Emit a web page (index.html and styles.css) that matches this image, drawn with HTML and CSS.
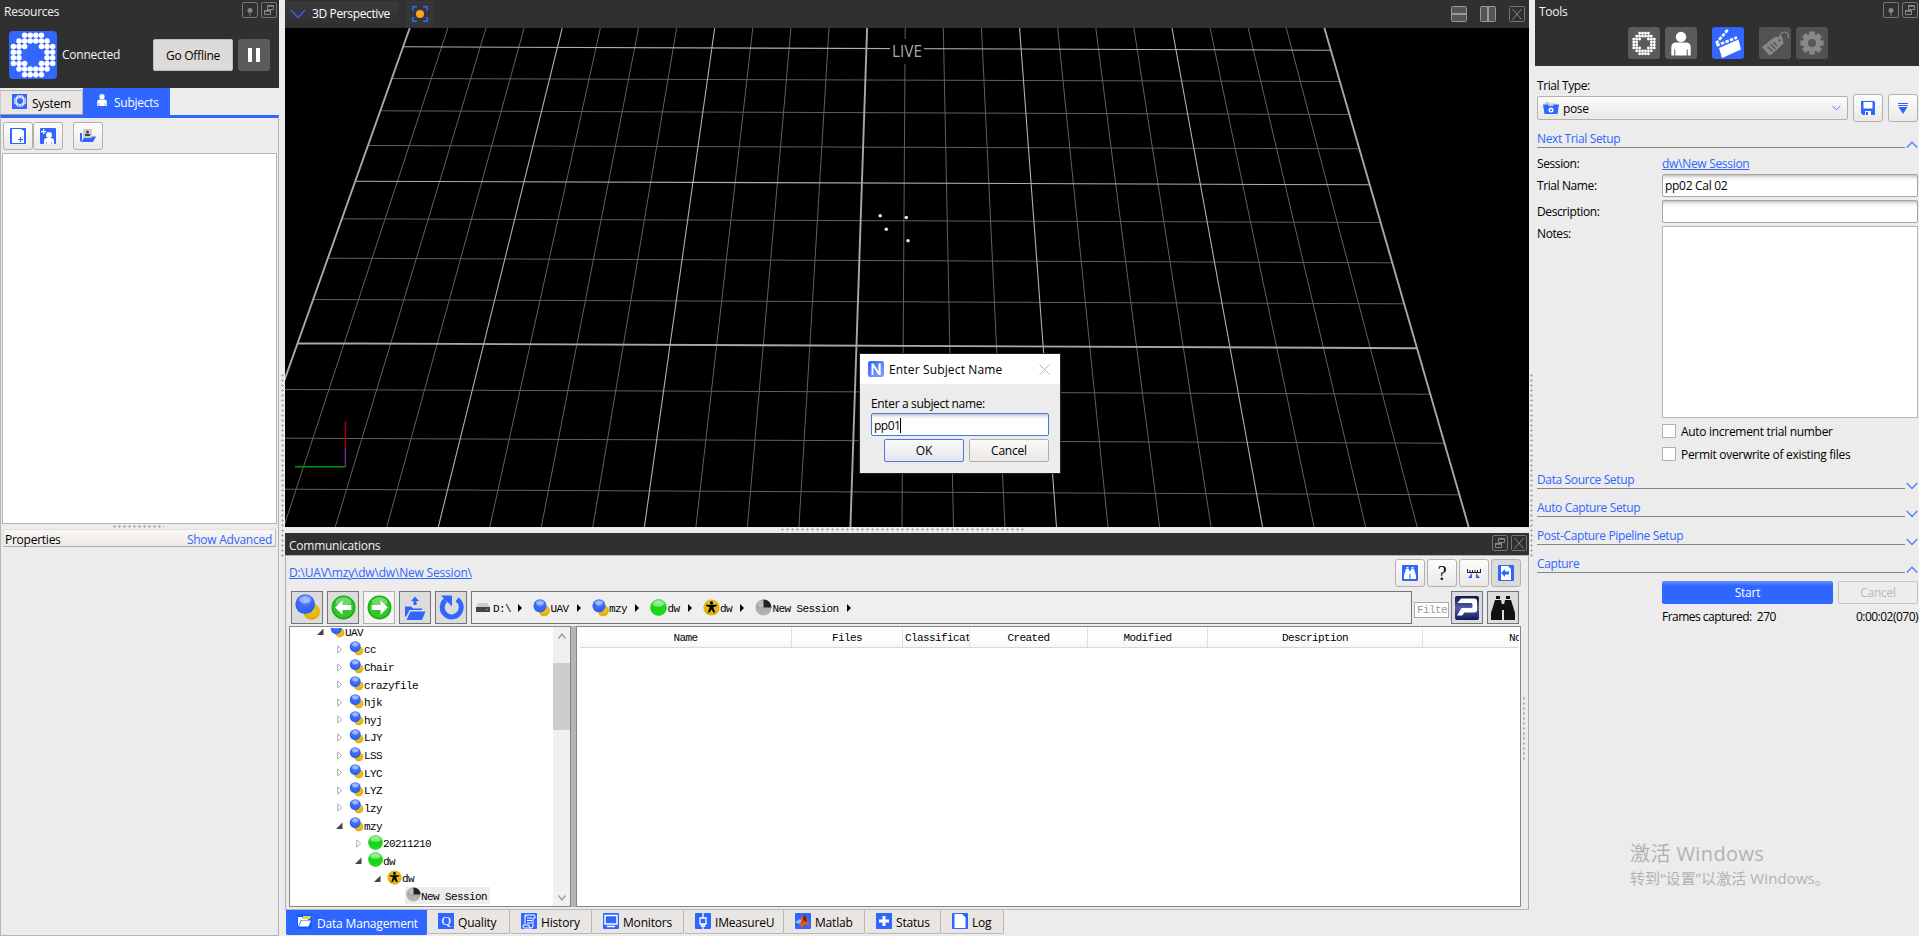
FILE: index.html
```html
<!DOCTYPE html>
<html lang="en">
<head>
<meta charset="utf-8">
<title>Capture Workspace</title>
<link rel="stylesheet" href="styles.css">
</head>
<body>
<svg class="defs" width="0" height="0">
  <defs>
    <radialGradient id="gb" cx=".5" cy=".3" r=".7"><stop offset="0" stop-color="#8aa8ff"/><stop offset=".45" stop-color="#3d6bff"/><stop offset="1" stop-color="#2f5ce8"/></radialGradient>
    <radialGradient id="gy" cx=".5" cy=".4" r=".7"><stop offset="0" stop-color="#efc92a"/><stop offset="1" stop-color="#d9a800"/></radialGradient>
    <linearGradient id="gg" x2="0" y2="1"><stop offset="0" stop-color="#7cf07c"/><stop offset=".45" stop-color="#19d319"/><stop offset="1" stop-color="#18e018"/></linearGradient>
    <linearGradient id="gs" x2="0" y2="1"><stop offset="0" stop-color="#999"/><stop offset="1" stop-color="#b8b8b8"/></linearGradient>
    <linearGradient id="gn" x2="1" y2="1"><stop offset="0" stop-color="#2f5fff"/><stop offset="1" stop-color="#86a6ff"/></linearGradient>
    <linearGradient id="gp" x2="0" y2="1"><stop offset="0" stop-color="#0d1248"/><stop offset=".5" stop-color="#5560a8"/><stop offset="1" stop-color="#10165a"/></linearGradient>
    <symbol id="ring" viewBox="-.6 -.6 8.2 8.2"><path fill="none" stroke="currentColor" stroke-width=".98" stroke-linecap="round" d="M2 0h.01M3 0h.01M4 0h.01M5 0h.01M1 1h.01M2 1h.01M3 1h.01M4 1h.01M5 1h.01M6 1h.01M0 2h.01M1 2h.01M2 2h.01M5 2h.01M6 2h.01M7 2h.01M0 3h.01M1 3h.01M6 3h.01M7 3h.01M0 4h.01M1 4h.01M6 4h.01M7 4h.01M0 5h.01M1 5h.01M2 5h.01M5 5h.01M6 5h.01M7 5h.01M1 6h.01M2 6h.01M3 6h.01M4 6h.01M5 6h.01M6 6h.01M2 7h.01M3 7h.01M4 7h.01M5 7h.01"/></symbol>
    <symbol id="person" viewBox="0 0 20 24"><circle cx="10" cy="5.4" r="5.2" fill="currentColor"/><path fill="currentColor" d="M.3 24v-8q0-5 5-5h9.400q5 0 5 5v8h-3v-6h-1v6H4.300v-6h-1v6z"/></symbol>
    <symbol id="spheres" viewBox="0 0 24 26"><circle cx="16" cy="17" r="8" fill="url(#gy)"/><circle cx="9.800" cy="9.800" r="9.500" fill="url(#gb)"/><ellipse cx="9.800" cy="5.500" rx="6" ry="3.500" fill="#fff" opacity=".35"/></symbol>
    <symbol id="green" viewBox="0 0 16 16"><circle cx="8" cy="8" r="7.500" fill="url(#gg)" stroke="#13b813" stroke-width=".5"/><ellipse cx="8" cy="4.500" rx="5" ry="2.800" fill="#fff" opacity=".4"/></symbol>
    <symbol id="biped" viewBox="0 0 16 16"><circle cx="8" cy="8" r="7.600" fill="url(#gy)"/><circle cx="8" cy="3.700" r="1.500"/><path d="M3 5.500h10v1.200L9.700 7.800l1.800 5h-1.700L8 9.800l-1.800 3H4.500l1.800-5L3 6.700z"/></symbol>
    <symbol id="session" viewBox="0 0 16 16"><circle cx="8" cy="8" r="7.500" fill="url(#gs)"/><ellipse cx="7" cy="4.500" rx="4.500" ry="3" fill="#fff" opacity=".3"/><path d="M8 8V.5A7.500 7.500 0 0 1 15.500 8z" fill="#222"/></symbol>
    <symbol id="pin" viewBox="0 0 16 16"><rect x=".5" y=".5" width="15" height="15" rx="1.500" fill="none" stroke="#777772"/><circle cx="8" cy="8.500" r="2.500" fill="#888"/><path d="M8 10v4.500" stroke="#666" stroke-width="1.500"/></symbol>
    <symbol id="float" viewBox="0 0 16 16"><rect x=".5" y=".5" width="15" height="15" rx="1.500" fill="none" stroke="#777772"/><path d="M6.500 3.500h6v4h-6zM3.500 8.500h6v4h-6z" fill="#303030" stroke="#888880"/><path d="M6 4h7M3 9h7" stroke="#888880" stroke-width="1.500"/></symbol>
    <symbol id="close" viewBox="0 0 16 16"><rect x=".5" y=".5" width="15" height="15" rx="1" fill="none" stroke="#777772"/><path d="M3.500 3l9 10.500M12.500 3l-9 10.500" stroke="#888880"/></symbol>
    <symbol id="bino" viewBox="0 0 24 26"><path fill="currentColor" d="M5 1h4v3H5zM15 1h4v3h-4zM4 5h6l1 5v15H0v-7zM14 5h6l4 13v7H13V10zM10.500 9h3v6h-3z"/></symbol>
    <symbol id="arrow" viewBox="0 0 24 24"><circle cx="12" cy="12" r="10.700" fill="#35c52c" stroke="#18b010" stroke-width="1.500"/><ellipse cx="12" cy="6.500" rx="7.500" ry="4.500" fill="#fff" opacity=".3"/><path fill="#fff" d="M4 12l7-7v4.500h8.500v5H11V19z"/></symbol>
    <symbol id="down" viewBox="0 0 12 8"><path d="M.8 1L6 6.500 11.200 1" fill="none" stroke="#4d7dff" stroke-width="1.300"/></symbol>
    <symbol id="up" viewBox="0 0 12 8"><path d="M.8 6.500L6 1.200l5.200 5.300" fill="none" stroke="#4d7dff" stroke-width="1.300"/></symbol>
    <symbol id="twig" viewBox="0 0 8 10"><path d="M2.500 1l4.500 4-4.500 4z" fill="#fff" stroke="#a6a6a6"/></symbol>
    <symbol id="open" viewBox="0 0 8 8"><path d="M7.500 1v6.500H1z" fill="#444"/></symbol>
  </defs>
</svg>

<main class="app">
  <aside class="left">
    <header class="res-head">
      <div class="titlebar"><span>Resources</span><span class="winbtns"><svg><use href="#pin"/></svg><svg><use href="#float"/></svg></span></div>
      <div class="conn">
        <div class="logo"><svg width="46" height="46"><use href="#ring"/></svg></div>
        <span class="conn-text">Connected</span>
        <button class="offline">Go Offline</button>
        <button class="pause"><i></i><i></i></button>
      </div>
    </header>
    <nav class="res-tabs">
      <div class="rtab"><span class="mini"><svg width="12" height="12"><use href="#ring"/></svg></span><span>System</span></div>
      <div class="rtab on"><svg width="10" height="12"><use href="#person"/></svg><span>Subjects</span></div>
    </nav>
    <div class="res-body">
      <div class="res-tools">
        <button class="tb"><svg width="16" height="16" viewBox="0 0 16 16"><rect width="16" height="16" rx="1" fill="#2f66ff"/><path d="M2 1h9l3 2v12H2z" fill="#fff"/><path d="M10.500 9v5M8 11.500h5" stroke="#2f66ff" stroke-width="1.200"/></svg></button>
        <button class="tb"><svg width="16" height="16" viewBox="0 0 16 16"><rect width="16" height="16" rx="1" fill="#2f66ff"/><circle cx="9" cy="7" r="3" fill="#fff"/><path d="M4 16v-3q0-3 3-3h4q3 0 3 3v3h-2v-2h-.5v2h-5v-2H6v2zM3 1h1.200v2H6v1.200H4.200V6H3V4.200H1V3h2z" fill="#fff"/></svg></button>
        <button class="tb gapped"><svg width="16" height="14" viewBox="0 0 16 14"><path d="M0 4h2v6l-1 3-1-1z" fill="#2f66ff"/><path d="M3 0h9v9H3z" fill="#ccc"/><circle cx="7.500" cy="3" r="1.500" fill="#444"/><path d="M5 7V5h5v2z" fill="#444"/><path d="M4 9h7l1.500-1.500H16L13 13H1z" fill="#2f66ff"/></svg></button>
      </div>
      <div class="subject-list"></div>
      <div class="hgrip small"></div>
      <div class="props"><span>Properties</span><a>Show Advanced</a></div>
    </div>
  </aside>

  <div class="vgrip"></div>

  <section class="center">
    <div class="viewbar">
      <div class="viewsel"><svg width="16" height="10" viewBox="0 0 16 10"><path d="M1 1l7 7.500L15 1" fill="none" stroke="#2f66ff" stroke-width="1.200"/></svg><span>3D Perspective</span></div>
      <div class="focus"><svg width="16" height="16" viewBox="0 0 16 16"><path d="M.8 5V.8H5M11 .8h4.200V5M15.200 11v4.200H11M5 15.200H.8V11" fill="none" stroke="#2f66ff" stroke-width="1.600"/><circle cx="8" cy="8" r="4" fill="#ffa51e"/></svg></div>
      <div class="splitbtns">
        <svg viewBox="0 0 16 16"><rect x=".5" y=".5" width="15" height="15" rx="1" fill="#555" stroke="#999"/><path d="M1 8h14" stroke="#999" stroke-width="2"/></svg>
        <svg viewBox="0 0 16 16"><rect x=".5" y=".5" width="15" height="15" rx="1" fill="#555" stroke="#999"/><path d="M8 1v14" stroke="#999" stroke-width="2"/></svg>
        <svg><use href="#close"/></svg>
      </div>
    </div>
    <div class="view3d">
      <svg class="scene" width="1244" height="499" viewBox="285 28 1244 499">
        <g fill="none">
          <path class="minor" d="M447.900 28L283.700 527M486 28L335.200 527M524.100 28L386.800 527M600.400 28L489.800 527M638.500 28L541.300 527M676.600 28L592.800 527M752.800 28L695.900 527M790.900 28L747.400 527M829 28L798.900 527M905.200 28L902 527M943.300 28L953.500 527M981.500 28L1005 527M1057.700 28L1108 527M1095.800 28L1159.600 527M1133.900 28L1211.100 527M1210.100 28L1314.100 527M1248.200 28L1365.600 527M1286.300 28L1417.200 527"/>
          <path class="minor" d="M392 78.500L1339.700 81.500M380.500 110.800L1349.300 114.500M368.200 145.500L1359.200 148.800M342 218.800L1380.500 222.500M328 258.200L1392.200 262.800M313.300 299.500L1404 303.800M285 389.500L1430.200 394.200M285 438.200L1444.300 443.200M285 489.200L1459.200 494.800"/>
          <path class="major" d="M562.200 28L438.300 527M714.700 28L644.400 527M1019.600 28L1056.500 527M1172 28L1262.600 527M403.300 46.800L1330.700 50.200M355.400 181.200L1369.600 184.800"/>
          <path class="bold" d="M409.800 28L232.200 527M867.100 28L850.400 527M1324.400 28L1468.700 527M297.800 343.200L1416.800 348.200"/>
        </g>
        <rect x="890" y="39" width="34" height="25" fill="#000"/>
        <text x="892" y="57.300" class="live" textLength="30" lengthAdjust="spacingAndGlyphs">LIVE</text>
        <g fill="#e4e4e4"><circle cx="880.200" cy="215.800" r="1.800"/><circle cx="906.300" cy="217.500" r="1.800"/><circle cx="886.300" cy="229.300" r="1.800"/><circle cx="908" cy="240.800" r="1.800"/></g>
        <path d="M345.400 421v27" stroke="#a00010" stroke-width="1.500"/><path d="M345.400 448v19" stroke="#6b2a90" stroke-width="1.500"/><path d="M295 466.700h50" stroke="#009800" stroke-width="1.500"/>
      </svg>
      <div class="dialog">
        <div class="dlg-title"><svg width="16" height="16" viewBox="0 0 16 16"><rect width="16" height="16" rx="2" fill="url(#gn)"/><path d="M3.500 14V2.500h2l5 8v-8h2.200V14h-2.200l-5-8v8z" fill="#fff"/></svg><span>Enter Subject Name</span><svg width="11" height="11" viewBox="0 0 11 11"><path d="M.5.5l10 10M10.500.5l-10 10" stroke="#b8b8b8"/></svg></div>
        <div class="dlg-body">
          <label>Enter a subject name:</label>
          <div class="input focus-in"><span>pp01</span><i class="caret"></i></div>
          <div class="dlg-btns"><button class="btn default">OK</button><button class="btn">Cancel</button></div>
        </div>
      </div>
    </div>
    <div class="hgrip wide"></div>
    <div class="comm-head"><span>Communications</span><span class="winbtns"><svg><use href="#float"/></svg><svg><use href="#close"/></svg></span></div>
    <div class="comm">
      <div class="path-row">
        <a>D:\UAV\mzy\dw\dw\New Session\</a>
        <div class="path-btns">
          <button class="tb"><svg width="16" height="16" viewBox="0 0 16 16"><rect width="16" height="16" rx="1" fill="#2f66ff"/><svg x="1.500" y="1.500" width="13" height="13" color="#fff"><use href="#bino"/></svg></svg></button>
          <button class="tb q">?</button>
          <button class="tb"><svg width="14" height="9" viewBox="0 0 14 9"><path d="M0 3.500h14M.5 0v3M3 1v2M5.500 1v2M8 1v2M10.500 1v2M13.500 0v3" stroke="#222"/><path d="M1 9l4-5v5zM13 9L9 4v5z" fill="#2f66ff"/></svg></button>
          <button class="tb pressed"><svg width="16" height="16" viewBox="0 0 16 16"><rect width="16" height="16" rx="1" fill="#2f66ff"/><path d="M3 1h7l3 3v11H3z" fill="#fff"/><path d="M3 8l4-4v2.500h4v3H7V12z" fill="#2f66ff"/></svg></button>
        </div>
      </div>
      <div class="nav-row">
        <button class="nb"><svg width="25" height="27"><use href="#spheres"/></svg></button>
        <button class="nb"><svg width="25" height="25"><use href="#arrow"/></svg></button>
        <button class="nb light"><svg width="25" height="25" class="flip"><use href="#arrow"/></svg></button>
        <button class="nb"><svg width="22" height="24" viewBox="0 0 22 24"><path fill="#2f66ff" d="M9.500 9V5H7l4-4.500L15 5h-2.500v4zM1 10.500h6l2 2h9V14H5.500L2 21l-1-1zM6.500 15.500H21.500L18 24H2.500z"/></svg></button>
        <button class="nb"><svg width="25" height="25" viewBox="0 0 25 25"><path d="M18 4.500A9.500 9.500 0 1 1 6.500 5.200" fill="none" stroke="#2f66ff" stroke-width="5"/><path d="M2 .5h11v11z" fill="#2f66ff"/></svg></button>
        <div class="crumbs">
          <svg width="14" height="9" viewBox="0 0 14 9"><path d="M2 0h10l2 5H0z" fill="#ccc"/><path d="M0 4h14v5H0z" fill="#444"/><path d="M10 6.500h2" stroke="#3d3"/></svg><span class="c1">D:\</span><b></b>
          <svg class="sp" width="17" height="18"><use href="#spheres"/></svg><span>UAV</span><b></b>
          <svg class="sp" width="17" height="18"><use href="#spheres"/></svg><span>mzy</span><b></b>
          <svg class="sp" width="17" height="17"><use href="#green"/></svg><span>dw</span><b></b>
          <svg class="sp" width="17" height="17"><use href="#biped"/></svg><span>dw</span><b></b>
          <svg class="sp" width="17" height="17"><use href="#session"/></svg><span>New Session</span><b></b>
        </div>
        <div class="filter">Filter</div>
        <button class="nb p"><svg width="24" height="24" viewBox="0 0 24 24"><rect width="24" height="24" rx="2" fill="url(#gp)"/><path d="M6 2.500h13q3 0 3 3V14q0 2.500-3 2.500H9.500L7 19.500H2L6.500 12H16q1.500 0 1.500-1.500v-2q0-1.500-1.500-1.500H2.500z" fill="#fff"/></svg></button>
        <button class="nb b"><svg width="24" height="26" color="#111"><use href="#bino"/></svg></button>
      </div>
      <div class="panes">
        <div class="tree">
          <div class="rows">
            <div class="row l0 cut"><svg class="tw"><use href="#open"/></svg><svg class="ic"><use href="#spheres"/></svg><span>UAV</span></div>
            <div class="row l1"><svg class="tw"><use href="#twig"/></svg><svg class="ic"><use href="#spheres"/></svg><span>cc</span></div>
            <div class="row l1"><svg class="tw"><use href="#twig"/></svg><svg class="ic"><use href="#spheres"/></svg><span>Chair</span></div>
            <div class="row l1"><svg class="tw"><use href="#twig"/></svg><svg class="ic"><use href="#spheres"/></svg><span>crazyfile</span></div>
            <div class="row l1"><svg class="tw"><use href="#twig"/></svg><svg class="ic"><use href="#spheres"/></svg><span>hjk</span></div>
            <div class="row l1"><svg class="tw"><use href="#twig"/></svg><svg class="ic"><use href="#spheres"/></svg><span>hyj</span></div>
            <div class="row l1"><svg class="tw"><use href="#twig"/></svg><svg class="ic"><use href="#spheres"/></svg><span>LJY</span></div>
            <div class="row l1"><svg class="tw"><use href="#twig"/></svg><svg class="ic"><use href="#spheres"/></svg><span>LSS</span></div>
            <div class="row l1"><svg class="tw"><use href="#twig"/></svg><svg class="ic"><use href="#spheres"/></svg><span>LYC</span></div>
            <div class="row l1"><svg class="tw"><use href="#twig"/></svg><svg class="ic"><use href="#spheres"/></svg><span>LYZ</span></div>
            <div class="row l1"><svg class="tw"><use href="#twig"/></svg><svg class="ic"><use href="#spheres"/></svg><span>lzy</span></div>
            <div class="row l1"><svg class="tw"><use href="#open"/></svg><svg class="ic"><use href="#spheres"/></svg><span>mzy</span></div>
            <div class="row l2"><svg class="tw"><use href="#twig"/></svg><svg class="ic"><use href="#green"/></svg><span>20211210</span></div>
            <div class="row l2"><svg class="tw"><use href="#open"/></svg><svg class="ic"><use href="#green"/></svg><span>dw</span></div>
            <div class="row l3"><svg class="tw"><use href="#open"/></svg><svg class="ic"><use href="#biped"/></svg><span>dw</span></div>
            <div class="row l4"><div class="sel"><svg class="ic"><use href="#session"/></svg><span>New Session</span></div></div>
          </div>
          <div class="scroll">
            <svg width="8" height="6" viewBox="0 0 8 6"><path d="M.5 5.500L4 1l3.500 4.500" fill="none" stroke="#999" stroke-width="1.300"/></svg>
            <div class="thumb"></div>
            <svg width="8" height="6" viewBox="0 0 8 6"><path d="M.5.500L4 5 7.500.500" fill="none" stroke="#999" stroke-width="1.300"/></svg>
          </div>
        </div>
        <div class="split"></div>
        <div class="table">
          <div class="thead"><div>Name</div><div>Files</div><div>Classification</div><div>Created</div><div>Modified</div><div>Description</div><div class="last">Notes</div></div>
        </div>
        <div class="sidegrip"></div>
      </div>
    </div>
    <nav class="btabs">
      <div class="bt on"><svg width="15" height="15" viewBox="0 0 15 15"><rect width="15" height="15" rx="2" fill="#0a60ff"/><path d="M1 3h4l1 1.500h5V6H4l-3 7z" fill="#fff"/><path d="M6 2h8l-1 3H6z" fill="#f7c948"/><path d="M4.500 6.500H14l-2.500 6H2z" fill="#fff"/></svg><span>Data Management</span></div>
      <div class="bt"><em class="qi">Q</em><span>Quality</span></div>
      <div class="bt"><svg width="16" height="16" viewBox="0 0 16 16"><rect width="16" height="16" rx="1" fill="#2f66ff"/><path d="M4 11V2h9q1.500 0 1 3h-2v8q0 2-2 2H3q-1.500 0-1-3h6v1q0 2 2 2M4 2q1 0 1 2M6 5h5M6 7.500h5M6 10h5" fill="none" stroke="#fff"/></svg><span>History</span></div>
      <div class="bt"><svg width="16" height="16" viewBox="0 0 16 16"><rect width="16" height="16" rx="1" fill="#2f66ff"/><rect x="2" y="2.500" width="12" height="8.500" fill="none" stroke="#fff" stroke-width="1.500"/><path d="M4 13.500h8" stroke="#fff" stroke-width="1.500"/></svg><span>Monitors</span></div>
      <div class="bt"><svg width="16" height="16" viewBox="0 0 16 16"><rect width="16" height="16" rx="1" fill="#2f66ff"/><path d="M5 5h6v6H5zM8 0v5M8 11v5M6.500 11v3M9.500 11v3" fill="none" stroke="#fff" stroke-width="1.300"/></svg><span>IMeasureU</span></div>
      <div class="bt"><svg width="16" height="16" viewBox="0 0 16 16"><rect width="16" height="16" rx="1" fill="#2f66ff"/><path d="M0 9l5-3 2 2-3 3z" fill="#7fc4e8"/><path d="M5 6l4-5 2 3 4 9-5-2-3 4-3-4 3-3z" fill="#e06018"/><path d="M9 1l2 3 1 6-3-3-2 5z" fill="#7a1810"/></svg><span>Matlab</span></div>
      <div class="bt"><svg width="16" height="16" viewBox="0 0 16 16"><rect width="16" height="16" rx="1" fill="#2f66ff"/><path d="M8 3v10M3 8h10" stroke="#fff" stroke-width="3"/></svg><span>Status</span></div>
      <div class="bt"><svg width="16" height="16" viewBox="0 0 16 16"><rect width="16" height="16" rx="1" fill="#2f66ff"/><path d="M2.500 1H10l3.500 3.500V15h-11z" fill="#fff"/></svg><span>Log</span></div>
    </nav>
  </section>

  <div class="vgrip r"></div>

  <aside class="right">
    <header class="tool-head">
      <div class="titlebar"><span>Tools</span><span class="winbtns"><svg><use href="#pin"/></svg><svg><use href="#float"/></svg></span></div>
      <div class="tool-row">
        <div class="tool"><svg width="24" height="25"><use href="#ring"/></svg></div>
        <div class="tool"><svg width="20" height="25"><use href="#person"/></svg></div>
        <div class="tool on"><svg width="32" height="32" viewBox="0 0 32 32"><path d="M7 21L26.500 12.500 29 22.500 10 31z" fill="#fff"/><path d="M4.500 18.500L25 10.500" stroke="#fff" stroke-width="2.600" stroke-dasharray="3.500 1.300"/><path d="M4 16.500L16.500 2" stroke="#fff" stroke-width="2.600" stroke-dasharray="3.500 1.300"/></svg></div>
        <div class="tool dim"><svg width="28" height="28" viewBox="0 0 28 28"><path d="M1 18L13 8.500l8-1.500 1.500 7.500L10 26q-2 1-3-1z" fill="#888"/><circle cx="18.500" cy="11" r="1.500" fill="#555"/><path d="M18.500 11q0-8 5-8t3.500 6" fill="none" stroke="#888" stroke-width="1.200"/><path d="M6.500 17.500l5 5M9.500 15l5 5M12.500 13l3.500 4" stroke="#555" stroke-width="1.300"/></svg></div>
        <div class="tool dim"><svg width="24" height="24" viewBox="0 0 24 24"><g stroke="#888" stroke-width="5.500"><path d="M12 .5v23M.5 12h23M3.900 3.900l16.200 16.200M20.100 3.900L3.900 20.100"/></g><circle cx="12" cy="12" r="9" fill="#888"/><circle cx="12" cy="12" r="4" fill="#585858"/></svg></div>
      </div>
    </header>
    <div class="tool-body">
      <div class="lab tt">Trial Type:</div>
      <div class="type-row">
        <div class="combo"><svg width="16" height="12" viewBox="0 0 16 12"><path d="M2 0h4l1 1.500h6V5H2z" fill="#ccc"/><path d="M0 2.500h5l1 1.500h4l1-1.500h5L14.500 12h-13z" fill="#2f66ff"/><circle cx="8" cy="8" r="2.500" fill="#fff"/><circle cx="8" cy="8.300" r="1" fill="#2f66ff"/></svg><span>pose</span><svg width="9" height="6"><use href="#down"/></svg></div>
        <button class="tb"><svg width="14" height="14" viewBox="0 0 14 14"><path d="M0 0h13l1 1v13H2l-2-2z" fill="#2f66ff"/><path d="M2.500 1h9v6.500h-9zM4 10h6v4H4z" fill="#fff"/><path d="M5 11h2v3H5z" fill="#2f66ff"/></svg></button>
        <button class="tb"><svg width="10" height="11" viewBox="0 0 10 11"><path d="M0 .5h10M0 2.500h10" stroke="#2f66ff"/><path d="M.5 4h9L5 11z" fill="#2f66ff"/></svg></button>
      </div>
      <div class="sec s1"><span>Next Trial Setup</span><svg><use href="#up"/></svg></div>
      <div class="form">
        <label class="f1">Session:</label><a class="f1">dw\New Session</a>
        <label>Trial Name:</label><div class="input">pp02 Cal 02</div>
        <label>Description:</label><div class="input"></div>
        <label class="notes">Notes:</label><div class="area"></div>
      </div>
      <div class="checks">
        <div class="chk"><i></i><span>Auto increment trial number</span></div>
        <div class="chk"><i></i><span>Permit overwrite of existing files</span></div>
      </div>
      <div class="sec"><span>Data Source Setup</span><svg><use href="#down"/></svg></div>
      <div class="sec"><span>Auto Capture Setup</span><svg><use href="#down"/></svg></div>
      <div class="sec"><span>Post-Capture Pipeline Setup</span><svg><use href="#down"/></svg></div>
      <div class="sec"><span>Capture</span><svg><use href="#up"/></svg></div>
      <div class="cap-row"><button class="start">Start</button><button class="btn off">Cancel</button></div>
      <div class="frames"><span>Frames captured:&nbsp; 270</span><span class="tc">0:00:02(070)</span></div>
      <div class="mark"><div>激活 Windows</div><p>转到“设置”以激活 Windows。</p></div>
    </div>
  </aside>
</main>
</body>
</html>
```
FILE: styles.css
```css
* { box-sizing: border-box; }
body {
  margin: 0; width: 1919px; height: 936px; overflow: hidden; background: #ececec;
  font: 12px/16px "Open Sans", "Noto Sans", sans-serif; letter-spacing: -0.25px; color: #000;
}
svg { flex: none; display: block; }
.defs { position: absolute; }
button { font: inherit; letter-spacing: inherit; padding: 0; margin: 0; display: flex; align-items: center; justify-content: center; }
span { white-space: nowrap; }
a { color: #2f66ff; white-space: nowrap; }
.app { display: flex; height: 936px; }

/* title bars */
.titlebar { display: flex; justify-content: space-between; color: #f2f2f2; height: 20px; padding: 2px 2px 0 4px; }
.titlebar > span:first-child { padding-top: 2px; }
.winbtns { display: flex; gap: 3px; }
.winbtns svg { width: 16px; height: 16px; }

/* resources panel */
.left { width: 279px; display: flex; flex-direction: column; }
.res-head { background: #303030; height: 88px; }
.conn { display: flex; align-items: center; padding: 11px 9px 0; color: #f2f2f2; }
.logo { width: 48px; height: 48px; border-radius: 4px; background: #3366ff; display: grid; place-items: center; color: #fff; }
.conn-text { margin-left: 5px; width: 91px; }
.offline { width: 80px; height: 32px; background: #dedad8; border: 1px solid #bbb; border-radius: 2px; padding-top: 1px; }
.pause { width: 32px; height: 32px; margin-left: 5px; background: #5b5b5b; border: 0; border-radius: 3px; gap: 4px; }
.pause i { width: 4px; height: 14px; background: #fff; }
.res-tabs { display: flex; align-items: flex-end; height: 27px; }
.rtab { height: 25px; width: 83px; border: 1px solid #b5b5b5; border-left-color: #ccc; background: #e9e5e3; display: flex; align-items: center; padding: 2px 0 0 11px; gap: 5px; border-bottom-color: #999; }
.rtab.on { height: 27px; width: 87px; background: #2f66ff; border-color: #2f66ff; color: #fff; padding-left: 13px; gap: 7px; }
.rtab.on svg { margin-bottom: 5px; }
.mini { width: 15px; height: 15px; background: #3366ff; display: grid; place-items: center; color: #fff; margin-bottom: 5px; }
.res-body { flex: 1; border: 1px solid #b5b5b5; border-top: 3px solid #2f66ff; padding: 4px 1px 0; display: flex; flex-direction: column; }
.res-tools { display: flex; height: 31px; padding-left: 1px; }
.tb { width: 30px; height: 28px; border: 1px solid #b4b0ae; border-radius: 3px; background: linear-gradient(#fdfdfd, #ebe8e6); flex: none; }
.tb.gapped { margin-left: 10px; }
.tb.pressed { background: #dcdad9; }
.subject-list { height: 371px; background: #fff; border: 1px solid #b5b5b5; }
.hgrip { background: radial-gradient(circle, #b2b2b2 1.100px, transparent 1.400px) 0 0 / 5px 5px repeat-x; height: 5px; }
.hgrip.small { width: 52px; margin: 0 auto; transform: translateX(-2px); }
.props { height: 18px; background: linear-gradient(#f8f5f3, #eeebe9); border: 1px solid #e2e0de; border-bottom-color: #aaa; border-right-color: #bbb; display: flex; justify-content: space-between; padding: 1px 3px 0 1px; margin: 0 1px; }
.props, .props a { line-height: 17px; }
.vgrip { width: 6px; background: radial-gradient(circle, #b2b2b2 1.100px, transparent 1.400px) 1px 0 / 5px 5px repeat-y; height: 184px; margin-top: 373px; }
.vgrip.r { background-position: 0 0; }

/* 3D view */
.center { width: 1244px; display: flex; flex-direction: column; flex: none; }
.viewbar { height: 28px; background: #303030; display: flex; align-items: center; color: #fff; padding: 0 4px 0 1px; }
.viewsel { width: 113px; height: 24px; background: linear-gradient(#3a3a3a, #303030); display: flex; align-items: center; gap: 6px; padding-left: 4px; letter-spacing: -0.370px; }
.focus { width: 28px; height: 26px; margin-left: 7px; background: #363636; display: grid; place-items: center; }
.splitbtns { margin-left: auto; display: flex; gap: 13px; }
.splitbtns svg { width: 16px; height: 16px; }
.view3d { height: 499px; background: #000; position: relative; overflow: hidden; }
.minor { stroke: #606060; stroke-width: 1; }
.major { stroke: #b0b0b0; stroke-width: 1.100; }
.bold { stroke: #a8a8a8; stroke-width: 1.900; }
.live { fill: #a4abb5; font-size: 16px; letter-spacing: 0; }

.dialog { position: absolute; left: 575px; top: 326px; width: 200px; height: 119px; background: #ececec; box-shadow: 0 0 0 1px #222; }
.dlg-title { height: 30px; background: #fff; display: flex; align-items: center; padding: 0 10px 0 8px; letter-spacing: 0.150px; }
.dlg-title span { flex: 1; margin-left: 5px; padding-top: 1px; }
.dlg-body { padding: 12px 11px 0; letter-spacing: -0.350px; }
.dlg-body label { display: block; height: 17px; }
.input { height: 23px; border: 1px solid #a5a5a5; border-radius: 2px; background: linear-gradient(#c4c4c4, #f2f2f2 3px, #fff 6px); padding: 3px 2px 0; display: flex; }
.focus-in { border-color: #4a78e0; letter-spacing: -0.500px; padding-top: 4px; }
.caret { width: 1px; height: 15px; background: #000; }
.dlg-btns { display: flex; justify-content: flex-end; gap: 5px; margin-top: 3px; letter-spacing: -0.200px; }
.btn { width: 80px; height: 23px; border: 1px solid #b0aeac; border-radius: 2px; background: linear-gradient(#fafafa, #ebe8e6); color: #000; padding-top: 1px; }
.btn.default { border-color: #4a78e0; background: linear-gradient(#fafafa, #e4e6ea); }
.btn.off { color: #b8b8b8; border-color: #c4c4c4; background: #efedeb; }

/* communications */
.hgrip.wide { width: 245px; height: 5px; margin: 0 0 1px 495px; }
.comm-head { height: 22px; background: #303030; color: #f2f2f2; display: flex; justify-content: space-between; padding: 2px 2px 0 4px; }
.comm-head > span:first-child { padding-top: 3px; }
.comm { border: 1px solid #b0b0b0; border-bottom-color: #b8b8b8; height: 355px; padding: 3px 7px 0 3px; }
.path-row { display: flex; justify-content: space-between; height: 32px; }
.path-row > a { text-decoration: underline; padding-top: 6px; letter-spacing: -0.190px; }
.path-btns { display: flex; gap: 2px; }
.q { font: 20px "Liberation Serif", serif; }
.nav-row { display: flex; gap: 4px; padding: 0 0 0 2px; height: 33px; align-items: flex-end; font: 11px/14px "Liberation Mono", monospace; letter-spacing: -0.600px; }
.nb { width: 32px; height: 33px; flex: none; background: #dcdcdc; border: 1px solid #747474; }
.nb.light { background: #f4f4f4; border-color: #b0b0b0; }
.flip { transform: scaleX(-1); }
.crumbs { width: 941px; height: 33px; border: 1px solid #747474; display: flex; align-items: center; padding-left: 4px; background: #efefef; }
.crumbs span { margin: 2px 8px 0 .5px; }
.crumbs .c1 { margin: 2px 7px 0 3px; }
.crumbs b { width: 0; height: 0; border-left: 4px solid #000; border-top: 4px solid transparent; border-bottom: 4px solid transparent; }
.crumbs .sp { margin-left: 11px; }
.filter { width: 35px; height: 16px; margin: 0 -2px 6px -2px; border: 1px solid #aaa; background: #fff; color: #999; overflow: hidden; padding-left: 2px; flex: none; }
.panes { display: flex; height: 281px; margin-top: 2px; font: 11px/14px "Liberation Mono", monospace; letter-spacing: -0.600px; position: relative; }
.tree { width: 282px; border: 1px solid #82878f; background: #fff; display: flex; overflow: hidden; }
.rows { flex: 1; margin-top: -4px; }
.row { height: 17.620px; display: flex; align-items: center; }
.tw { width: 8px; height: 9px; margin-right: 6px; margin-left: -1px; }
.ic { width: 15px; height: 15px; }
.row .ic { margin-top: -2px; }
.row span { margin-left: 0; padding-top: 2px; }
.l0 { padding-left: 27px; } .l1 { padding-left: 46px; } .l2 { padding-left: 65px; } .l3 { padding-left: 84px; } .l4 { padding-left: 115px; }
.cut { clip-path: inset(5px 0 0 0); }
.sel { background: #ececec; display: flex; align-items: center; height: 17px; padding: 0 3px 0 1px; }
.scroll { width: 17px; background: #f0f0f0; display: flex; flex-direction: column; align-items: center; padding: 6px 0 5px; }
.thumb { width: 17px; height: 67px; background: #cdcdcd; margin: 24px 0 auto; }
.split { width: 5px; background: #b5b5b5; }
.table { flex: 1; border: 1px solid #82878f; background: #fff; padding: 1px 2px 0 3px; overflow: hidden; }
.thead { display: grid; grid-template-columns: 212px 111px 67px 118px 120px 215px 96px; height: 20px; background: linear-gradient(#fff 50%, #f6f7f9); border-bottom: 1px solid #d5d9dd; }
.thead div { border-right: 1px solid #dde0e3; overflow: hidden; display: flex; justify-content: center; align-items: center; white-space: nowrap; }
.thead .last { border: 0; justify-content: flex-start; padding-left: 86px; }
.thead div:nth-child(3) { justify-content: flex-start; padding-left: 2px; }
.sidegrip { position: absolute; left: 1233px; top: 70px; width: 4px; height: 65px; background: radial-gradient(circle, #b2b2b2 1px, transparent 1.300px) 0 0 / 4px 5px repeat-y; }
.btabs { display: flex; height: 26px; padding-left: 1px; }
.bt { height: 24px; border: 1px solid #bab7b5; border-left: 0; border-top: 0; background: #e9e5e3; display: flex; align-items: center; gap: 4px; padding: 3px 0 0 11px; border-radius: 0 0 2px 2px; letter-spacing: -0.180px; }
.bt svg, .bt em { margin-bottom: 4px; }
.bt.on { height: 25px; background: #2f66ff; color: #fff; border-color: #2f66ff; width: 141px; gap: 5px; }
.bt:nth-child(2) { width: 83px; } .bt:nth-child(3) { width: 82px; } .bt:nth-child(4) { width: 92px; } .bt:nth-child(5) { width: 100px; } .bt:nth-child(6) { width: 81px; } .bt:nth-child(7) { width: 76px; } .bt:nth-child(8) { width: 63px; }
.qi { width: 16px; height: 16px; background: #2f66ff; color: #fff; font: 13px/15px "Liberation Serif", serif; text-align: center; }

/* tools panel */
.right { flex: 1; display: flex; flex-direction: column; }
.tool-head { background: #303030; height: 66px; }
.tool-head .titlebar { padding-right: 1px; }
.tool-row { display: flex; gap: 5px; padding: 7px 0 0 93px; }
.tool { width: 32px; height: 32px; border-radius: 3px; background: #5b5b5b; color: #fff; display: grid; place-items: center; }
.tool.on { background: #3366ff; margin: 0 10px; }
.tool.dim { background: #525252; }
.tool-body { padding: 0 1px 0 2px; }
.tt { padding-top: 12px; height: 28px; letter-spacing: -0.400px; }
.type-row { display: flex; gap: 5px; align-items: center; }
.combo { width: 311px; height: 24px; border: 1px solid #b4b0ae; border-radius: 2px; background: linear-gradient(#fbfbfb, #eae7e5); display: flex; align-items: center; padding: 0 6px 0 5px; }
.combo span { flex: 1; margin-left: 4px; padding-top: 1px; letter-spacing: -0.350px; }
.sec { height: 28px; color: #2f66ff; display: flex; padding-top: 11px; background: linear-gradient(#858585, #858585) 0 20px / 368px 1px no-repeat; letter-spacing: -0.370px; }
.sec span { margin-top: -7px; }
.sec svg { width: 12px; height: 8px; margin: 3px 0 0 auto; }
.s1 { margin-top: 5px; height: 27px; }
.form { display: grid; grid-template-columns: 125px 256px; grid-template-rows: 17px 23px 23px 192px; row-gap: 3px; letter-spacing: -0.400px; }
.form .input { letter-spacing: -0.300px; }
.form label { padding-top: 4px; }
.form .f1 { padding-top: 2px; }
.form a { text-decoration: underline; letter-spacing: -0.300px; }
.form .notes { padding-top: 0; }
.area { border: 1px solid #b5b5b5; background: #fff; }
.checks { padding: 6px 0 0 125px; height: 50px; display: flex; flex-direction: column; gap: 7px; letter-spacing: -0.300px; }
.chk { display: flex; gap: 5px; height: 16px; align-items: flex-start; }
.chk i { width: 14px; height: 14px; background: #fff; border: 1px solid #b0b0b0; }
.cap-row { display: flex; gap: 5px; padding: 1px 0 0 125px; }
.start { width: 171px; height: 23px; border: 0; border-radius: 2px; color: #fff; background: linear-gradient(#6a92ff, #2f66ff 5px); }
.frames { display: flex; justify-content: space-between; padding: 5px 0 0 125px; letter-spacing: -0.520px; }
.mark { margin: 216px 0 0 93px; color: #b2b2b2; font-family: "Open Sans", "Noto Sans CJK SC", sans-serif; font-size: 20px; line-height: 26px; letter-spacing: 0.400px; }
.mark p { font-size: 15px; line-height: 22px; margin: 0; white-space: nowrap; letter-spacing: 0.100px; }
```
